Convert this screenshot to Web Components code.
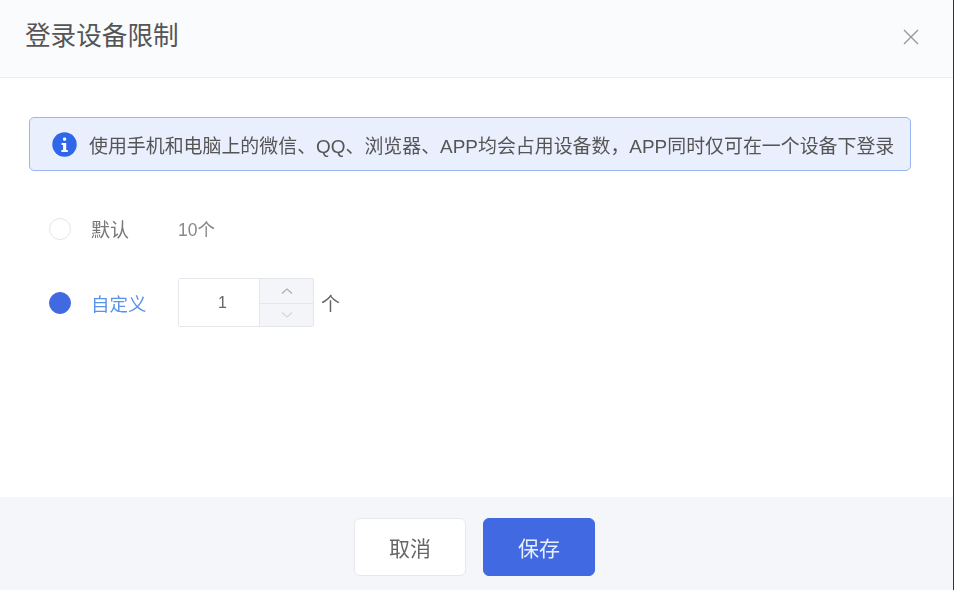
<!doctype html>
<html>
<head>
<meta charset="UTF-8" />
<style>
html, body { margin: 0; height: 100%; }
body { font-family: "Liberation Sans", "Noto Sans CJK SC", sans-serif; background: #fff; }
</style>
</head>
<body>
<template id="limit-alert">
  <style>
    :host { display: flex; align-items: center; height: 52px; margin: 39px 42px 0 29px; padding-left: 22px; gap: 12px; background: #e9effd; border: 1px solid #9ab6f2; border-radius: 5px; color: #555; font-size: 18.93px; white-space: nowrap; }
    svg { flex: none; }
  </style>
  <svg width="25" height="25" viewBox="0 0 25 25">
    <circle cx="12.5" cy="12.5" r="12.2" fill="#2f67e8"/>
    <rect x="11" y="5.6" width="3.2" height="3.2" rx="1.2" fill="#fff"/>
    <path d="M9.6 11h4.6v7h1.6v2H9.4v-2h1.7v-5H9.6z" fill="#fff"/>
  </svg>
  <span><slot></slot></span>
</template>

<template id="limit-radio">
  <style>
    :host { display: flex; align-items: center; gap: 20px; color: #777; font-size: 19px; }
    i { box-sizing: border-box; width: 22px; height: 22px; border-radius: 50%; border: 1px solid #e3e5ea; background: #fff; flex: none; }
    span { width: 87px; white-space: nowrap; }
    :host([checked]) { color: #5b93ea; font-size: 18.5px; }
    :host([checked]) i { background: #4169e1; border-color: #4169e1; }
  </style>
  <i></i><span><slot></slot></span>
</template>

<template id="limit-stepper">
  <style>
    :host { display: flex; box-sizing: border-box; width: 136px; height: 49px; border: 1px solid #e4e6ec; border-radius: 2px; background: #f4f5f9; }
    .val { box-sizing: border-box; width: 81px; padding-left: 7px; border-right: 1px solid #e4e6ec; background: #fff; display: flex; align-items: center; justify-content: center; color: #666; font-size: 16px; }
    .btns { flex: 1; display: flex; flex-direction: column; }
    .btns div { height: 24px; flex: none; display: flex; align-items: center; justify-content: center; }
    .btns div + div { height: 22px; border-top: 1px solid #e4e6ec; }
  </style>
  <div class="val"><slot></slot></div>
  <div class="btns">
    <div><svg width="14" height="8" viewBox="0 0 14 8"><path d="M2 6.5 7 2l5 4.5" fill="none" stroke="#a9acb3" stroke-width="1.2"/></svg></div>
    <div><svg width="14" height="8" viewBox="0 0 14 8"><path d="M2 1.5 7 6l5-4.5" fill="none" stroke="#d3d5da" stroke-width="1.2"/></svg></div>
  </div>
</template>

<template id="limit-button">
  <style>
    :host { display: flex; align-items: center; justify-content: center; box-sizing: border-box; width: 112px; height: 58px; border-radius: 6px; border: 1px solid #e6e8ec; background: #fff; color: #666; font-size: 21px; }
    :host([primary]) { background: #4169e1; border-color: #4169e1; color: #e8eefc; }
  </style>
  <slot></slot>
</template>

<template id="limit-dialog">
  <style>
    :host { display: flex; flex-direction: column; box-sizing: border-box; width: 954px; height: 590px; border-right: 1px solid #333; background: #fff; }
    .blur { display: flex; flex-direction: column; height: 100%; filter: blur(0.45px); }
    header { box-sizing: border-box; height: 78px; flex: none; display: flex; align-items: center; justify-content: space-between; padding: 0 33px 10px 25px; background: #fafbfd; border-bottom: 1px solid #eceef1; color: #555; font-size: 25.6px; }
    header svg { margin-top: 7px; }
    main { flex: 1; display: flex; flex-direction: column; }
    .rows { display: flex; flex-direction: column; padding: 44px 0 0 49px; gap: 36px; }
    .row { display: flex; align-items: center; }
    .muted { color: #888; font-size: 17.5px; }
    .unit { margin-left: 7px; color: #666; font-size: 19px; }
    footer { height: 93px; flex: none; display: flex; justify-content: center; gap: 17px; padding: 21px 4px 0 0; box-sizing: border-box; background: #f4f6fa; }
  </style>
  <div class="blur">
  <header>
    <span>登录设备限制</span>
    <svg width="18" height="18" viewBox="0 0 18 18"><path d="M2 2l14 14M16 2 2 16" stroke="#999" stroke-width="1.4" fill="none"/></svg>
  </header>
  <main>
    <limit-alert>使用手机和电脑上的微信、QQ、浏览器、APP均会占用设备数，APP同时仅可在一个设备下登录</limit-alert>
    <div class="rows">
      <div class="row"><limit-radio>默认</limit-radio><span class="muted">10个</span></div>
      <div class="row"><limit-radio checked>自定义</limit-radio><limit-stepper>1</limit-stepper><span class="unit">个</span></div>
    </div>
  </main>
  <footer>
    <limit-button>取消</limit-button>
    <limit-button primary>保存</limit-button>
  </footer>
  </div>
</template>

<limit-dialog></limit-dialog>

<script>
'use strict'

// every element just clones its template into an open shadow root
for (const name of ['limit-alert', 'limit-radio', 'limit-stepper', 'limit-button', 'limit-dialog']) {
  customElements.define(name, class extends HTMLElement {
    constructor() {
      super();
      const template = document.querySelector('#' + name);
      const shadowRoot = this.attachShadow({ mode: 'open' });
      shadowRoot.appendChild(document.importNode(template.content, true));
    }
  });
}
</script>
</body>
</html>
